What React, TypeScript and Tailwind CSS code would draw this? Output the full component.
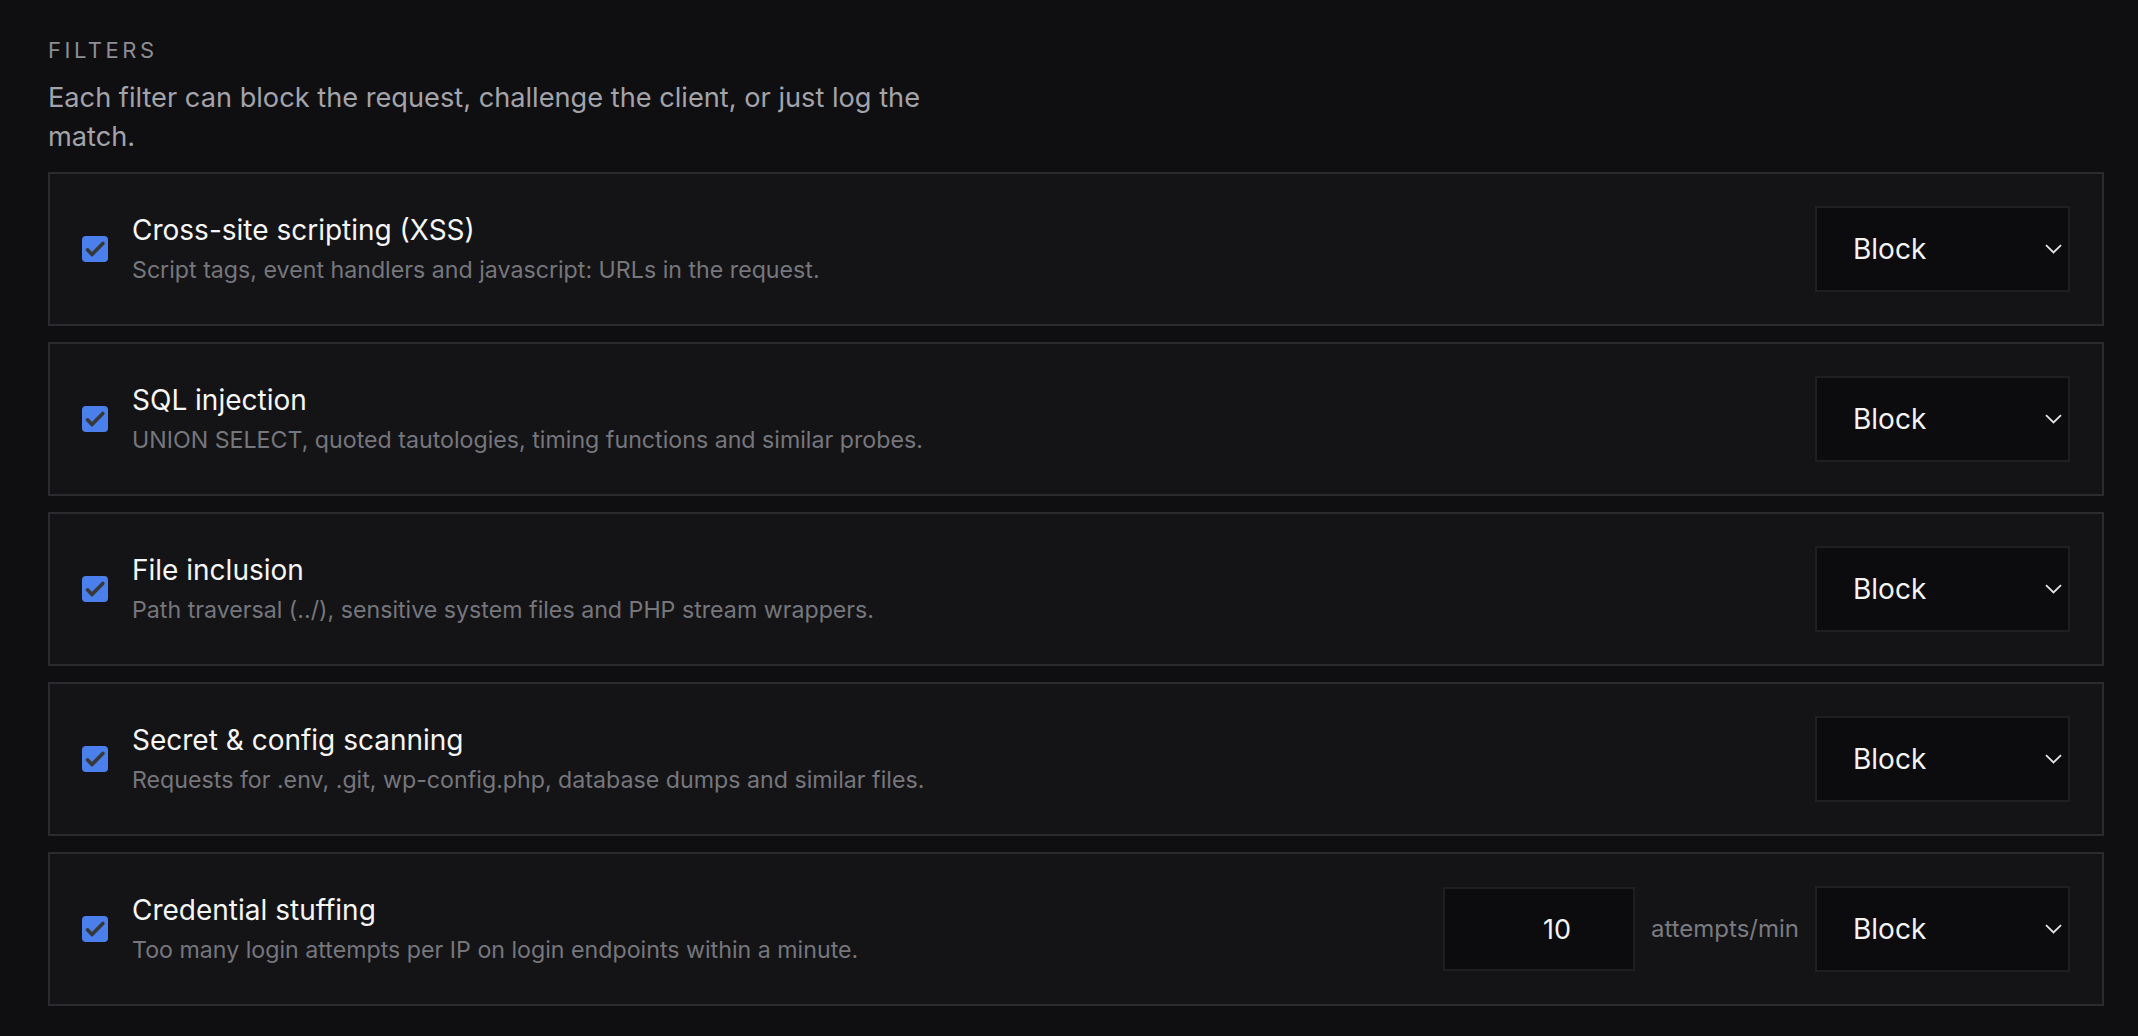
import React from 'react'

type Filter = {
  id: string
  title: string
  desc: string
  limit?: { value: string; unit: string }
}

const filters: Filter[] = [
  { id: 'xss', title: 'Cross-site scripting (XSS)', desc: 'Script tags, event handlers and javascript: URLs in the request.' },
  { id: 'sqli', title: 'SQL injection', desc: 'UNION SELECT, quoted tautologies, timing functions and similar probes.' },
  { id: 'lfi', title: 'File inclusion', desc: 'Path traversal (../), sensitive system files and PHP stream wrappers.' },
  { id: 'secrets', title: 'Secret & config scanning', desc: 'Requests for .env, .git, wp-config.php, database dumps and similar files.' },
  {
    id: 'creds',
    title: 'Credential stuffing',
    desc: 'Too many login attempts per IP on login endpoints within a minute.',
    limit: { value: '10', unit: 'attempts/min' },
  },
]

export default function App() {
  return (
    <div className="min-h-screen bg-[#0f0f11] pl-12 pr-[34px] pt-9 pb-8 font-['Inter','Noto_Sans',sans-serif]">
      {/* Header */}
      <p className="text-[22px] leading-[28px] tracking-[0.16em] uppercase text-[#8d8d94]">Filters</p>
      <p className="mt-[14px] max-w-[900px] text-[27.2px] leading-[39px] text-[#a3a3aa]">
        Each filter can block the request, challenge the client, or just log the match.
      </p>

      {/* Filter rows */}
      <div className="mt-4 flex flex-col gap-4">
        {filters.map((f) => (
          <FilterRow key={f.id} filter={f} />
        ))}
      </div>
    </div>
  )
}

function FilterRow({ filter }: { filter: Filter }) {
  return (
    <div className="flex items-center gap-6 border-2 border-[#2b2b2f] bg-[#141416] p-8">
      <Checkbox />
      <div className="flex-1 min-w-0">
        <p className="text-[28px] leading-[40px] text-[#f6f6f7]">{filter.title}</p>
        <p className="mt-0.5 text-[23.2px] leading-[36px] text-[#76767d]">{filter.desc}</p>
      </div>
      <div className="flex items-center gap-4">
        {filter.limit && (
          <>
            <input
              type="text"
              readOnly
              defaultValue={filter.limit.value}
              className="h-[84px] w-[192px] border-2 border-[#1f1f22] bg-[#0c0c0e] pr-[62px] text-right text-[27px] text-[#f4f4f5] outline-none"
            />
            <span className="text-[24px] text-[#7a7a81]">{filter.limit.unit}</span>
          </>
        )}
        <Select />
      </div>
    </div>
  )
}

function Checkbox() {
  return (
    <span className="flex h-[26px] w-[26px] flex-shrink-0 items-center justify-center rounded-[4px] bg-[#4b80ec]">
      <svg width="26" height="26" viewBox="0 0 26 26" fill="none">
        <path d="M5.5 13.8 L10 18.6 L20.8 7.4" stroke="#383839" strokeWidth="3.6" strokeLinecap="round" strokeLinejoin="round" />
      </svg>
    </span>
  )
}

function Select() {
  return (
    <div className="flex h-[86px] w-[255px] flex-shrink-0 items-center justify-between border-2 border-[#1f1f22] bg-[#0c0c0e] pl-9 pr-[6px]">
      <span className="text-[28px] text-[#f4f4f5]">Block</span>
      <svg width="17" height="10" viewBox="0 0 17 10" fill="none">
        <path d="M1 1.2 L8.5 8.5 L16 1.2" stroke="#e4e4e7" strokeWidth="1.8" />
      </svg>
    </div>
  )
}
